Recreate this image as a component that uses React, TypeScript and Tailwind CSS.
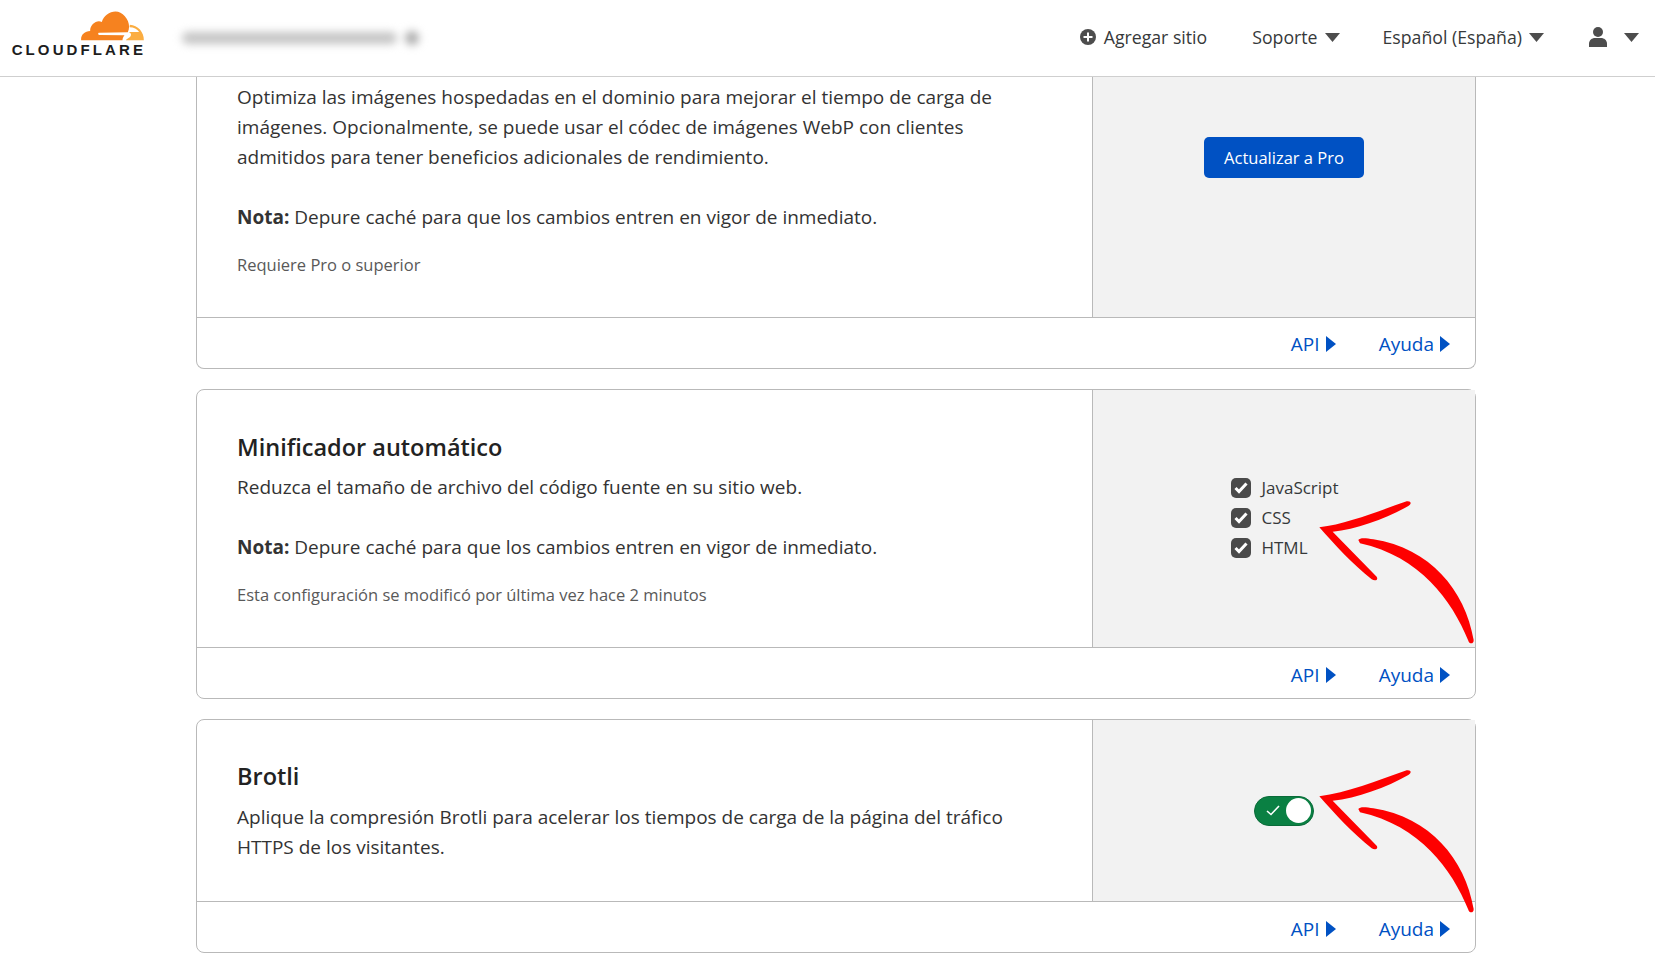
const Caret = ({ className }: { className: string }) => (
  <svg className={className} width="15" height="9" viewBox="0 0 15 9" fill="currentColor">
    <path d="M0 0h15L7.500 9z" />
  </svg>
);

const Logo = () => (
  <div className="mb-[8px] flex w-[132px] flex-col items-end">
    <svg width="65" height="30" viewBox="240 30 192 90" className="mr-[1px]">
      <path
        fill="#f6821f"
        d="M242 118C240 102 252 91 269 90C268 72 288 55 304 63C312 34 352 18 373 46C386 61 389 78 382 94L296 95C292 95 292 102 296 102L372 103C368 108 366 113 366 118Z"
      />
      <path
        fill="#fbad41"
        d="M388 71C412 72 431 93 430 118H376C378 112 388 111 391 104C393 98 389 94 384 93L416 93C410 84 400 79 387 79Z"
      />
    </svg>
    <span className="mt-[2px] font-['Liberation_Sans',sans-serif] text-[15px] leading-[14px] font-bold tracking-[3.1px] whitespace-nowrap text-[#1d1d1d]">
      CLOUDFLARE
    </span>
  </div>
);

const Header = () => (
  <header className="flex h-[77px] items-center border-b border-[#cfcfcf] bg-white pl-[14px] text-[17.7px] text-[#36393a]">
    <Logo />
    <div className="ml-[36px] flex items-center gap-[8px] blur-[4px]">
      <div className="h-[12px] w-[215px] rounded-full bg-[#c4c4c4]" />
      <div className="h-[14px] w-[14px] rounded-full bg-[#aaa]" />
    </div>
    <nav className="mb-[2px] ml-auto flex items-center pr-[16px]">
      <a className="flex items-center gap-[8px]" href="/">
        <svg width="16" height="16" viewBox="0 0 16 16">
          <circle cx="8" cy="8" r="8" fill="#4d4d4d" />
          <path d="M7 3.5h2V7h3.5v2H9v3.5H7V9H3.500V7H7z" fill="#fff" />
        </svg>
        Agregar sitio
      </a>
      <a className="ml-[45px] flex items-center gap-[7px]" href="/">
        Soporte
        <Caret className="text-[#4d4d4d]" />
      </a>
      <a className="ml-[43px] flex items-center gap-[7px]" href="/">
        Español (España)
        <Caret className="text-[#4d4d4d]" />
      </a>
      <a className="ml-[45px] flex items-center gap-[17px]" href="/">
        <svg width="18" height="20" viewBox="0 0 18 20" fill="#4d4d4d">
          <circle cx="9" cy="5" r="5" />
          <path d="M0 20v-3c0-4 3-6 6-6h6c3 0 6 2 6 6v3z" />
        </svg>
        <Caret className="text-[#4d4d4d]" />
      </a>
    </nav>
  </header>
);

const Arrow = ({ className }: { className: string }) => (
  <svg
    className={`absolute overflow-visible ${className}`}
    width="300"
    height="200"
    viewBox="0 0 900 600"
    fill="#fe0000"
  >
    <path d="M388 232C470 222 560 185 650 154C665 152 665 163 655 168C590 205 500 238 428 245L560 380C566 390 555 394 545 388C490 345 430 280 388 232Z" />
    <path d="M505 270C510 262 530 265 550 268C720 295 825 420 851 570C852 582 838 584 835 572C785 450 690 320 510 280Z" />
  </svg>
);

const FooterLink = ({ label }: { label: string }) => (
  <a className="flex items-center gap-[6px]" href="/">
    {label}
    <svg width="10" height="16" viewBox="0 0 10 16" fill="currentColor">
      <path d="M0 0l10 8-10 8z" />
    </svg>
  </a>
);

const Card = ({
  className,
  bodyClass,
  footerClass,
  panel,
  children,
}: {
  className: string;
  bodyClass: string;
  footerClass: string;
  panel: React.ReactNode;
  children: React.ReactNode;
}) => (
  <section className={`border border-[#b9b9b9] ${className}`}>
    <div className={`flex ${bodyClass}`}>
      <div className="w-[895px] pl-[40px] pr-[60px]">{children}</div>
      <div className="relative flex flex-1 items-center justify-center border-l border-[#b9b9b9] bg-[#f2f2f2]">
        {panel}
      </div>
    </div>
    <div
      className={`flex h-[51px] items-center justify-end gap-[43px] border-t border-[#b9b9b9] pr-[25px] text-[19px] text-[#0051c3] ${footerClass}`}
    >
      <FooterLink label="API" />
      <FooterLink label="Ayuda" />
    </div>
  </section>
);

const Note = () => (
  <p className="mt-[30px]">
    <strong className="font-bold">Nota:</strong> Depure caché para que los cambios entren en vigor de inmediato.
  </p>
);

const Check = ({ label }: { label: string }) => (
  <label className="flex h-[30px] items-center gap-[10px] text-[17px] text-[#36393a]">
    <span className="flex h-[20px] w-[20px] items-center justify-center rounded-[5px] bg-[#4a4a4a]">
      <svg width="14" height="12" viewBox="0 0 14 12" fill="none" stroke="#fff" strokeWidth="3">
        <path d="M1.500 6l3.500 3.500 7.500-8" />
      </svg>
    </span>
    {label}
  </label>
);

export default function App() {
  return (
    <div className="h-[961px] overflow-hidden bg-white font-['Open_Sans',sans-serif] text-[19px] leading-[30px] text-[#333]">
      <Header />
      <main className="ml-[196px] flex w-[1280px] flex-col gap-[20px]">
        <Card
          className="rounded-b-[8px] border-t-0"
          bodyClass="h-[240px]"
          footerClass="pt-[2px]"
          panel={
            <a
              className="mb-[80px] flex h-[41px] w-[160px] items-center justify-center rounded-[5px] bg-[#0051c3] pt-[2px] text-[16.5px] text-white"
              href="/"
            >
              Actualizar a Pro
            </a>
          }
        >
          <p className="mt-[5px]">
            Optimiza las imágenes hospedadas en el dominio para mejorar el tiempo de carga de imágenes. Opcionalmente,
            se puede usar el códec de imágenes WebP con clientes admitidos para tener beneficios adicionales de
            rendimiento.
          </p>
          <Note />
          <p className="mt-[18px] text-[16.5px] text-[#595959]">Requiere Pro o superior</p>
        </Card>
        <Card
          className="rounded-[8px]"
          bodyClass="h-[257px]"
          footerClass="pt-[4px]"
          panel={
            <>
              <div className="mt-[-1px] mr-[-2px] flex flex-col">
                <Check label="JavaScript" />
                <Check label="CSS" />
                <Check label="HTML" />
              </div>
              <Arrow className="left-[97px] top-[60px]" />
            </>
          }
        >
          <h2 className="mt-[39px] text-[23.5px] leading-[36px] font-semibold text-[#222]">Minificador automático</h2>
          <p className="mt-[7px]">Reduzca el tamaño de archivo del código fuente en su sitio web.</p>
          <Note />
          <p className="mt-[18px] text-[16.5px] text-[#595959]">
            Esta configuración se modificó por última vez hace 2 minutos
          </p>
        </Card>
        <Card
          className="rounded-[8px]"
          bodyClass="h-[181px]"
          footerClass="pt-[4px]"
          panel={
            <>
              <div className="relative flex h-[30px] w-[60px] items-center rounded-full border border-[#0a6b39] bg-[#0a8043]">
                <svg className="ml-[11px]" width="14" height="11" viewBox="0 0 14 11" fill="none" stroke="#fff" strokeWidth="1.600">
                  <path d="M1 6l4 3.500L13 1" />
                </svg>
                <span className="absolute right-[2px] h-[25px] w-[25px] rounded-full bg-white" />
              </div>
              <Arrow className="left-[97px] top-[-1px]" />
            </>
          }
        >
          <h2 className="mt-[38px] text-[23.5px] leading-[36px] font-semibold text-[#222]">Brotli</h2>
          <p className="mt-[8px]">
            Aplique la compresión Brotli para acelerar los tiempos de carga de la página del tráfico HTTPS de los
            visitantes.
          </p>
        </Card>
      </main>
    </div>
  );
}
